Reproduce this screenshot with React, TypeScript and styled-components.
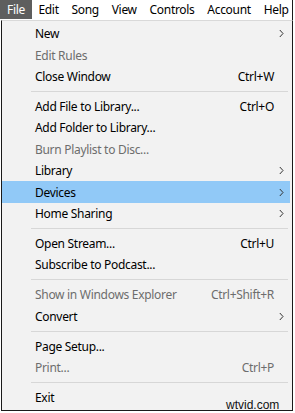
import React from 'react';
import styled, { createGlobalStyle } from 'styled-components';

// Estilos globais — fundo branco, sem margem
const GlobalStyle = createGlobalStyle`
  body {
    margin: 0;
    background: #ffffff;
    font-family: 'Noto Sans', 'Open Sans', sans-serif;
  }
`;

const Frame = styled.div`
  position: relative;
  width: 293px;
  height: 413px;
  background: #ffffff;
  overflow: hidden;
`;

const MenuBar = styled.div`
  display: flex;
  height: 20px;
  border-right: 1px solid #1a1a1a;
  background: #ffffff;
  overflow: hidden;
`;

const MenuTitle = styled.div<{ $active?: boolean }>`
  display: flex;
  align-items: center;
  padding: 0 6.4px;
  height: 19px;
  font-size: 12px;
  letter-spacing: -0.3px;
  white-space: nowrap;
  color: ${(p) => (p.$active ? '#ffffff' : '#000000')};
  background: ${(p) => (p.$active ? '#5e5e5e' : 'transparent')};

  &:first-child {
    padding: 0 7px;
  }
`;

const Dropdown = styled.div`
  margin-left: 1px;
  width: 288px;
  border: 1px solid #1a1a1a;
  border-top: 1px solid #d9d9d9;
  background: #f2f2f2;
  padding: 2px 2px 2px 0;
`;

const Row = styled.div<{ $disabled?: boolean; $highlight?: boolean }>`
  display: flex;
  align-items: center;
  height: 21.4px;
  padding-left: 33px;
  font-size: 12px;
  letter-spacing: -0.3px;
  color: ${(p) => (p.$disabled ? '#6d6d6d' : '#000000')};
  background: ${(p) => (p.$highlight ? '#91c9f7' : 'transparent')};
`;

const Label = styled.span`
  flex: 1;
  white-space: nowrap;
`;

const Shortcut = styled.span`
  white-space: nowrap;
`;

const ArrowCell = styled.span`
  width: 16px;
  display: flex;
  align-items: center;
  padding-left: 5px;
  box-sizing: border-box;
`;

const Separator = styled.div`
  height: 1px;
  margin: 3.8px 2px 3.8px 29px;
  background: #d7d7d7;
`;

const Watermark = styled.div`
  position: absolute;
  left: 226px;
  top: 398px;
  font-family: 'Liberation Sans', Arial, sans-serif;
  font-size: 12px;
  color: #111111;
`;

type Item =
  | { sep: true }
  | { label: string; shortcut?: string; sub?: boolean; disabled?: boolean; highlight?: boolean };

const items: Item[] = [
  { label: 'New', sub: true },
  { label: 'Edit Rules', disabled: true },
  { label: 'Close Window', shortcut: 'Ctrl+W' },
  { sep: true },
  { label: 'Add File to Library...', shortcut: 'Ctrl+O' },
  { label: 'Add Folder to Library...' },
  { label: 'Burn Playlist to Disc...', disabled: true },
  { label: 'Library', sub: true },
  { label: 'Devices', sub: true, highlight: true },
  { label: 'Home Sharing', sub: true },
  { sep: true },
  { label: 'Open Stream...', shortcut: 'Ctrl+U' },
  { label: 'Subscribe to Podcast...' },
  { sep: true },
  { label: 'Show in Windows Explorer', shortcut: 'Ctrl+Shift+R', disabled: true },
  { label: 'Convert', sub: true },
  { sep: true },
  { label: 'Page Setup...' },
  { label: 'Print...', shortcut: 'Ctrl+P', disabled: true },
  { sep: true },
  { label: 'Exit' },
];

const titles = ['File', 'Edit', 'Song', 'View', 'Controls', 'Account', 'Help'];

function Chevron() {
  return (
    <svg width="5" height="9" viewBox="0 0 5 9">
      <polyline points="0.8,1 4,4.5 0.8,8" fill="none" stroke="#333" strokeWidth="1" />
    </svg>
  );
}

export default function App() {
  return (
    <Frame>
      <GlobalStyle />
      <MenuBar>
        {titles.map((t, i) => (
          <MenuTitle key={t} $active={i === 0}>
            {t}
          </MenuTitle>
        ))}
      </MenuBar>
      <Dropdown>
        {items.map((it, i) =>
          'sep' in it ? (
            <Separator key={i} />
          ) : (
            <Row key={i} $disabled={it.disabled} $highlight={it.highlight}>
              <Label>{it.label}</Label>
              {it.shortcut && <Shortcut>{it.shortcut}</Shortcut>}
              <ArrowCell>{it.sub && <Chevron />}</ArrowCell>
            </Row>
          )
        )}
      </Dropdown>
      <Watermark>wtvid.com</Watermark>
    </Frame>
  );
}
